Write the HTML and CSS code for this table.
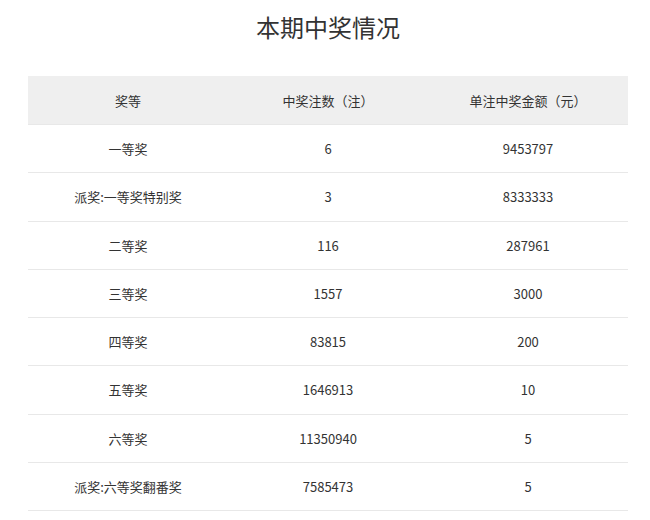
FILE: index.html
```html
<!DOCTYPE html>
<html lang="zh">
<head>
<meta charset="utf-8">
<link rel="stylesheet" href="styles.css">
</head>
<body>
<div class="wrap">
  <h1 class="title">本期中奖情况</h1>
  <table class="prize">
    <thead>
      <tr><th>奖等</th><th>中奖注数（注）</th><th>单注中奖金额（元）</th></tr>
    </thead>
    <tbody>
      <tr><td>一等奖</td><td>6</td><td>9453797</td></tr>
      <tr><td>派奖:一等奖特别奖</td><td>3</td><td>8333333</td></tr>
      <tr><td>二等奖</td><td>116</td><td>287961</td></tr>
      <tr><td>三等奖</td><td>1557</td><td>3000</td></tr>
      <tr><td>四等奖</td><td>83815</td><td>200</td></tr>
      <tr><td>五等奖</td><td>1646913</td><td>10</td></tr>
      <tr><td>六等奖</td><td>11350940</td><td>5</td></tr>
      <tr><td>派奖:六等奖翻番奖</td><td>7585473</td><td>5</td></tr>
    </tbody>
  </table>
</div>
</body>
</html>
```
FILE: styles.css
```css
html, body {
  margin: 0;
  padding: 0;
  background: #fff;
}
body {
  font-family: "Noto Sans CJK SC", "Noto Sans", sans-serif;
  color: #333;
}
.wrap {
  width: 600px;
  padding-left: 28px;
}
.title {
  margin: 0;
  padding-top: 9px;
  height: 76px;
  box-sizing: border-box;
  font-size: 24px;
  font-weight: normal;
  line-height: 36px;
  text-align: center;
  color: #333;
}
.prize {
  width: 600px;
  border-collapse: collapse;
  table-layout: fixed;
  font-size: 13px;
}
.prize th, .prize td {
  height: 47.25px;
  padding: 0;
  text-align: center;
  vertical-align: middle;
  border-bottom: 1px solid #e8e8e8;
  font-weight: normal;
  color: #333;
}
.prize th {
  height: 48px;
  background: #efefef;
}
```
